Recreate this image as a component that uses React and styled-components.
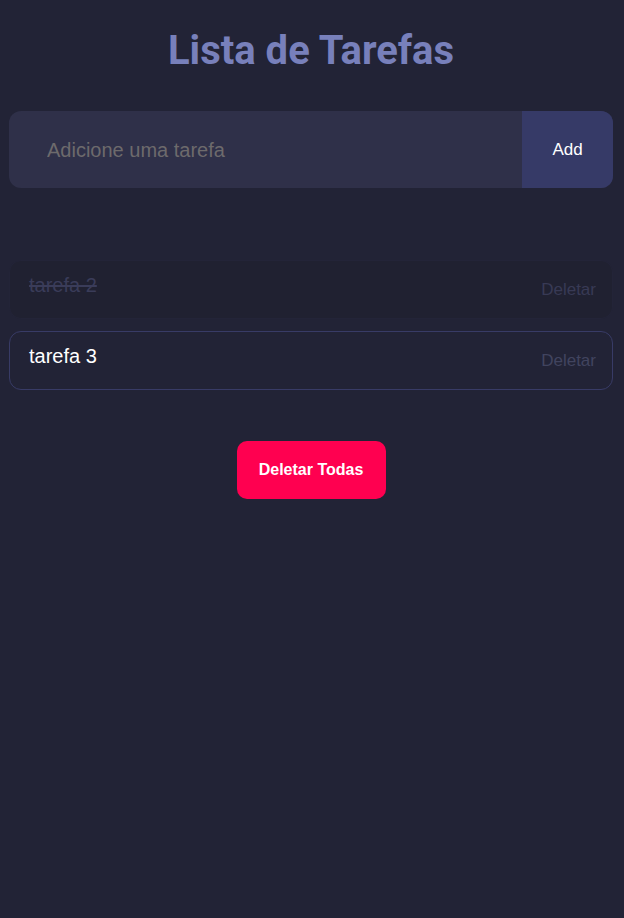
import React, { useState } from "react";
import styled, { createGlobalStyle } from "styled-components";

const GlobalStyle = createGlobalStyle`
  html, body {
    margin: 0;
    padding: 0;
    background: #222336;
    min-height: 100%;
  }
  body {
    font-family: "Liberation Sans", Arial, sans-serif;
  }
`

const Container = styled.div`
  min-height: 918px;
  padding: 0 11px 0 9px;
  box-sizing: border-box;
  display: flex;
  flex-direction: column;
`

const Title = styled.h1`
  font-family: Roboto, "Liberation Sans", sans-serif;
  font-weight: 700;
  font-size: 40px;
  color: #7880bb;
  text-align: center;
  margin: 27px 0 37px;
  line-height: 47px;
`

const Form = styled.form`
  display: flex;
  height: 77px;
  border-radius: 12px;
  overflow: hidden;
  background: #2f3049;
  margin-bottom: 72px;
`

const Input = styled.input`
  flex: 1;
  border: none;
  outline: none;
  background: transparent;
  padding: 2px 0 0 38px;
  font-family: "Liberation Sans", Arial, sans-serif;
  font-size: 20px;
  color: #fff;

  &::placeholder {
    color: #6d6a6c;
  }
`

const AddButton = styled.button`
  width: 91px;
  border: none;
  background: #363a67;
  color: #fff;
  font-family: "Liberation Sans", Arial, sans-serif;
  font-size: 17px;
  cursor: pointer;
`

const List = styled.ul`
  list-style: none;
  margin: 0;
  padding: 0;
  display: flex;
  flex-direction: column;
  gap: 12px;
`

const Item = styled.li`
  height: 59px;
  box-sizing: border-box;
  border-radius: 12px;
  border: 1px solid ${(p) => (p.$done ? "#232438" : "#383b66")};
  background: ${(p) => (p.$done ? "#202131" : "transparent")};
  display: flex;
  justify-content: space-between;
  padding: 0 16px 0 19px;
`

const TaskText = styled.span`
  font-family: "Liberation Sans", Arial, sans-serif;
  font-size: 20px;
  margin-top: 13px;
  color: ${(p) => (p.$done ? "#3a3c59" : "#ffffff")};
  text-decoration: ${(p) => (p.$done ? "line-through" : "none")};
`

const DeleteButton = styled.button`
  border: none;
  background: none;
  padding: 0;
  font-family: "Liberation Sans", Arial, sans-serif;
  font-size: 17px;
  color: ${(p) => (p.$done ? "#383a55" : "#41445f")};
  cursor: pointer;
  align-self: flex-start;
  margin-top: 19px;
`

const Footer = styled.div`
  display: flex;
  justify-content: center;
  margin-top: 51px;
`

const ClearButton = styled.button`
  width: 149px;
  height: 58px;
  border: none;
  border-radius: 10px;
  background: #ff0050;
  color: #fff;
  font-family: "Liberation Sans", Arial, sans-serif;
  font-weight: 700;
  font-size: 16px;
  cursor: pointer;
`

const App = () => {
  const [tasks] = useState([
    { id: 2, text: "tarefa 2", done: true },
    { id: 3, text: "tarefa 3", done: false },
  ])

  return (
    <>
      <GlobalStyle />
      <Container>
        <Title>Lista de Tarefas</Title>
        <Form onSubmit={(e) => e.preventDefault()}>
          <Input placeholder="Adicione uma tarefa" />
          <AddButton type="submit">Add</AddButton>
        </Form>
        <List>
          {tasks.map((t) => (
            <Item key={t.id} $done={t.done}>
              <TaskText $done={t.done}>{t.text}</TaskText>
              <DeleteButton $done={t.done}>Deletar</DeleteButton>
            </Item>
          ))}
        </List>
        <Footer>
          <ClearButton>Deletar Todas</ClearButton>
        </Footer>
      </Container>
    </>
  )
}

export default App;
